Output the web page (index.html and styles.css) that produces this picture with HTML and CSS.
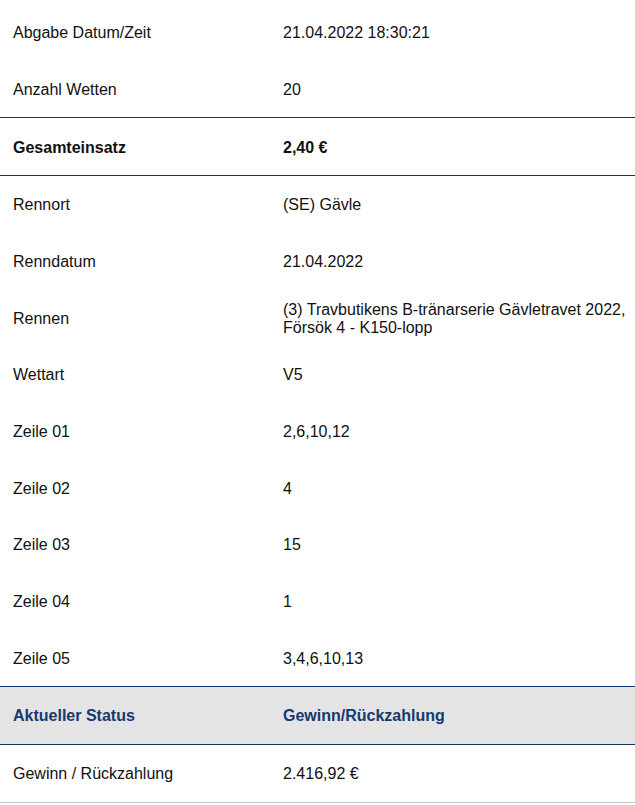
FILE: index.html
```html
<!DOCTYPE html>
<html lang="de">
<head>
<meta charset="utf-8">
<link rel="stylesheet" href="styles.css">
</head>
<body>
<div class="details">
  <div class="row"><div class="label">Abgabe Datum/Zeit</div><div class="value">21.04.2022 18:30:21</div></div>
  <div class="row"><div class="label">Anzahl Wetten</div><div class="value">20</div></div>
  <div class="row total"><div class="label">Gesamteinsatz</div><div class="value">2,40 €</div></div>
  <div class="row mid"><div class="label">Rennort</div><div class="value">(SE) Gävle</div></div>
  <div class="row mid"><div class="label">Renndatum</div><div class="value">21.04.2022</div></div>
  <div class="row mid"><div class="label">Rennen</div><div class="value">(3) Travbutikens B-tränarserie Gävletravet 2022, Försök 4 - K150-lopp</div></div>
  <div class="row mid"><div class="label">Wettart</div><div class="value">V5</div></div>
  <div class="row mid"><div class="label">Zeile 01</div><div class="value">2,6,10,12</div></div>
  <div class="row mid"><div class="label">Zeile 02</div><div class="value">4</div></div>
  <div class="row mid"><div class="label">Zeile 03</div><div class="value">15</div></div>
  <div class="row mid"><div class="label">Zeile 04</div><div class="value">1</div></div>
  <div class="row mid"><div class="label">Zeile 05</div><div class="value">3,4,6,10,13</div></div>
  <div class="row status"><div class="label">Aktueller Status</div><div class="value">Gewinn/Rückzahlung</div></div>
  <div class="row payout"><div class="label">Gewinn / Rückzahlung</div><div class="value">2.416,92 €</div></div>
</div>
</body>
</html>
```
FILE: styles.css
```css
html, body {
  margin: 0;
  padding: 0;
  background: #ffffff;
}
body {
  font-family: "Liberation Sans", Arial, sans-serif;
  font-size: 16px;
  line-height: 18px;
  color: #111111;
}
.details {
  padding-top: 3px;
  width: 635px;
}
.row {
  display: grid;
  grid-template-columns: 270px 1fr;
  align-items: center;
  height: 57px;
  box-sizing: border-box;
}
.row.mid {
  height: 56.67px;
}
.label {
  padding-left: 13px;
  padding-top: 2px;
}
.value {
  padding-left: 13px;
  padding-right: 4px;
  padding-top: 2px;
}
.total {
  font-weight: bold;
  border-top: 1px solid #1b3560;
  border-bottom: 1px solid #1b3560;
  height: 59px;
}
.status {
  background: #e4e4e4;
  color: #173a6e;
  font-weight: bold;
  border-top: 1px solid #10397a;
  border-bottom: 1px solid #1b3560;
  height: 59px;
}
.payout {
  border-bottom: 1px solid #c4c4c4;
  height: 58px;
}
```
